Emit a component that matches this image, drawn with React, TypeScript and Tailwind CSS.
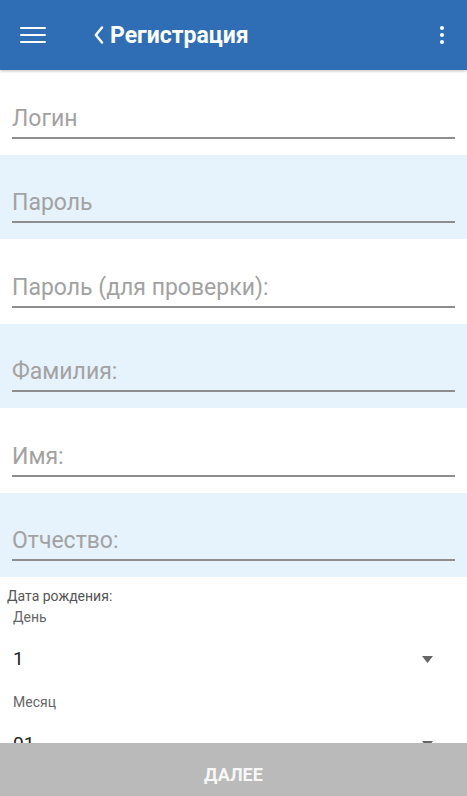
import React from "react";

const fields = [
  "Логин",
  "Пароль",
  "Пароль (для проверки):",
  "Фамилия:",
  "Имя:",
  "Отчество:",
];

function Field({ label, shaded }: { label: string; shaded: boolean }) {
  return (
    <div
      className={`h-[84.5px] px-3 flex flex-col justify-end pb-[16px] ${
        shaded ? "bg-[#e6f3fc]" : "bg-white"
      }`}
    >
      <div className="border-b-2 border-[#8e8e8e] pb-[4px]">
        <input
          placeholder={label}
          className="w-full bg-transparent outline-none text-[23px] leading-[1.2] text-[#333] placeholder:text-[#a2a2a2]"
        />
      </div>
    </div>
  );
}

function Select({ label, value }: { label: string; value: string }) {
  return (
    <div className="pl-[13px] pr-[34px]">
      <div className="text-[14px] leading-[17px] text-[#666]">{label}</div>
      <div className="h-[68px] pt-[22px]">
        <div className="flex items-center justify-between h-[22px]">
          <span className="text-[19px] leading-[22px] text-[#222]">{value}</span>
          <svg width="11" height="7" viewBox="0 0 11 7">
            <path d="M0 0H11L5.5 7Z" fill="#666" />
          </svg>
        </div>
      </div>
    </div>
  );
}

export default function App() {
  return (
    <div className="h-screen flex flex-col bg-white font-['Roboto',sans-serif] overflow-hidden">
      <header className="h-[70px] shrink-0 bg-[#2f6eb5] flex items-center relative z-10 shadow-[0_1px_3px_rgba(0,0,0,0.25)]">
        <div className="ml-[20px] w-[26px] flex flex-col gap-[4.5px]">
          <span className="h-[2.5px] bg-white rounded" />
          <span className="h-[2.5px] bg-white rounded" />
          <span className="h-[2.5px] bg-white rounded" />
        </div>
        <div className="ml-[48px] flex items-center gap-[6px]">
          <svg width="10" height="18" viewBox="0 0 10 18">
            <path d="M8 1.5 L1.8 9 L8 16.5" stroke="white" strokeWidth="2.4" fill="none" strokeLinecap="round" strokeLinejoin="round" />
          </svg>
          <span className="text-white font-bold text-[23px] leading-none">Регистрация</span>
        </div>
        <div className="ml-auto mr-[23px] flex flex-col gap-[3px] items-center">
          <span className="w-[4px] h-[4px] rounded-full bg-white" />
          <span className="w-[4px] h-[4px] rounded-full bg-white" />
          <span className="w-[4px] h-[4px] rounded-full bg-white" />
        </div>
      </header>

      <main className="flex-1 overflow-hidden">
        {fields.map((f, i) => (
          <Field key={f} label={f} shaded={i % 2 === 1} />
        ))}
        <div className="pt-[11px]">
          <div className="pl-[7px] text-[14px] leading-[17px] text-[#555] mb-[4px]">Дата рождения:</div>
          <Select label="День" value="1" />
          <Select label="Месяц" value="01" />
        </div>
      </main>

      <button className="h-[53px] shrink-0 bg-[#bababa] text-[#f7f7f7] font-bold text-[18px] pt-[9px]">
        ДАЛЕЕ
      </button>
    </div>
  );
}
